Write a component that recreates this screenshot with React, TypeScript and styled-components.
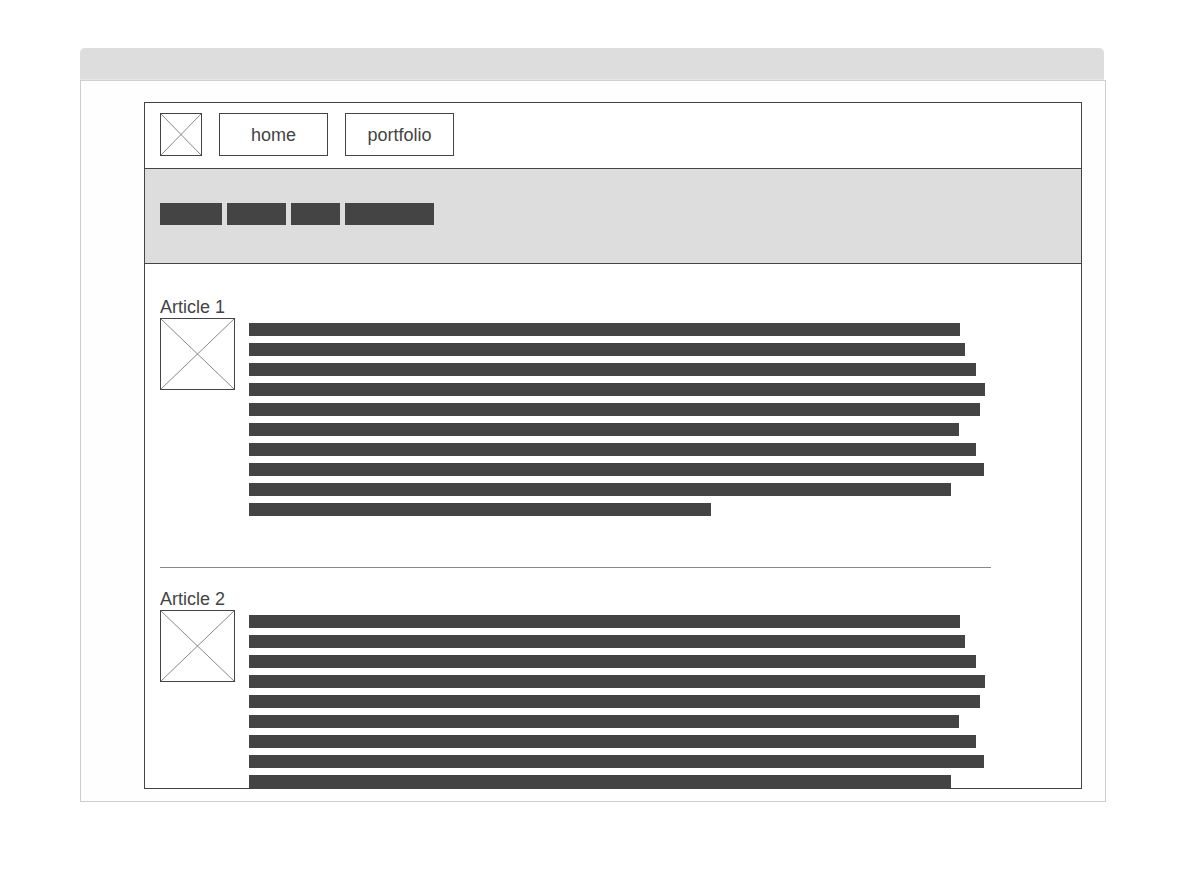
import React from "react";
import styled, { createGlobalStyle } from "styled-components";

const Global = createGlobalStyle`
  html, body { margin: 0; padding: 0; background: #ffffff; }
  body { font-family: "Liberation Sans", Arial, sans-serif; }
`;

const Page = styled.div`
  padding: 48px 0 0 80px;
`;

const Browser = styled.div`
  width: 1026px;
  display: flex;
  flex-direction: column;
`;

const TitleBar = styled.div`
  width: 1024px;
  height: 32px;
  background: #dddddd;
  border-radius: 5px 5px 0 0;
  box-sizing: border-box;
  border-bottom: 1px solid #e6e6e6;
`;

const Viewport = styled.div`
  box-sizing: border-box;
  width: 1026px;
  height: 722px;
  border: 1px solid #cccccc;
  border-top-color: #d0d0d0;
  background: #fefefe;
  padding: 21px 0 0 63px;
`;

const Frame = styled.div`
  box-sizing: border-box;
  width: 938px;
  height: 687px;
  border: 1px solid #444444;
  background: #ffffff;
  overflow: hidden;
  display: flex;
  flex-direction: column;
`;

const Header = styled.div`
  flex: none;
  display: flex;
  align-items: flex-start;
  gap: 17px;
  height: 66px;
  box-sizing: border-box;
  padding: 10px 15px 0;
  border-bottom: 1px solid #444444;
`;

const Placeholder = styled.div<{ $w: number; $h: number }>`
  box-sizing: border-box;
  width: ${(p) => p.$w}px;
  height: ${(p) => p.$h}px;
  border: 1px solid #444444;
  flex: none;
  svg { display: block; width: 100%; height: 100%; }
`;

const NavButton = styled.div<{ $w: number }>`
  box-sizing: border-box;
  width: ${(p) => p.$w}px;
  height: 43px;
  border: 1px solid #444444;
  display: flex;
  align-items: center;
  justify-content: center;
  font-size: 18px;
  color: #444444;
  padding-top: 1px;
`;

const Band = styled.div`
  flex: none;
  box-sizing: border-box;
  height: 95px;
  background: #dddddd;
  border-bottom: 1px solid #444444;
  display: flex;
  align-items: flex-start;
  gap: 5px;
  padding: 34px 15px 0;
`;

const Block = styled.div<{ $w: number }>`
  width: ${(p) => p.$w}px;
  height: 22px;
  background: #444444;
`;

const Content = styled.div`
  flex: none;
  padding: 33px 15px 0;
  display: flex;
  flex-direction: column;
`;

const Article = styled.section`
  display: flex;
  flex-direction: column;
`;

const ArticleTitle = styled.div`
  font-size: 18px;
  line-height: 21px;
  color: #444444;
`;

const ArticleBody = styled.div`
  display: flex;
  gap: 14px;
  align-items: flex-start;
`;

const Lines = styled.div`
  display: flex;
  flex-direction: column;
  gap: 7px;
  padding-top: 5px;
`;

const Line = styled.div`
  height: 13px;
  background: #444444;
`;

const Divider = styled.hr`
  width: 831px;
  margin: 51px 0 21px;
  border: none;
  border-top: 1px solid #888888;
  height: 0;
`;

const Cross = () => (
  <svg viewBox="0 0 100 100" preserveAspectRatio="none">
    <line x1="0" y1="0" x2="100" y2="100" stroke="#888" strokeWidth="1" vectorEffect="non-scaling-stroke" />
    <line x1="100" y1="0" x2="0" y2="100" stroke="#888" strokeWidth="1" vectorEffect="non-scaling-stroke" />
  </svg>
);

const lineEnds = [960, 965, 976, 985, 980, 959, 976, 984, 951, 711];

const ArticleBlock = ({ title }: { title: string }) => (
  <Article>
    <ArticleTitle>{title}</ArticleTitle>
    <ArticleBody>
      <Placeholder $w={75} $h={72}>
        <Cross />
      </Placeholder>
      <Lines>
        {lineEnds.map((e, i) => (
          <Line key={i} style={{ width: e - 249 }} />
        ))}
      </Lines>
    </ArticleBody>
  </Article>
);

export default function App() {
  return (
    <>
      <Global />
      <Page>
        <Browser>
          <TitleBar />
          <Viewport>
            <Frame>
              <Header>
                <Placeholder $w={42} $h={43}>
                  <Cross />
                </Placeholder>
                <NavButton $w={109}>home</NavButton>
                <NavButton $w={109}>portfolio</NavButton>
              </Header>
              <Band>
                <Block $w={62} />
                <Block $w={59} />
                <Block $w={49} />
                <Block $w={89} />
              </Band>
              <Content>
                <ArticleBlock title="Article 1" />
                <Divider />
                <ArticleBlock title="Article 2" />
              </Content>
            </Frame>
          </Viewport>
        </Browser>
      </Page>
    </>
  );
}
